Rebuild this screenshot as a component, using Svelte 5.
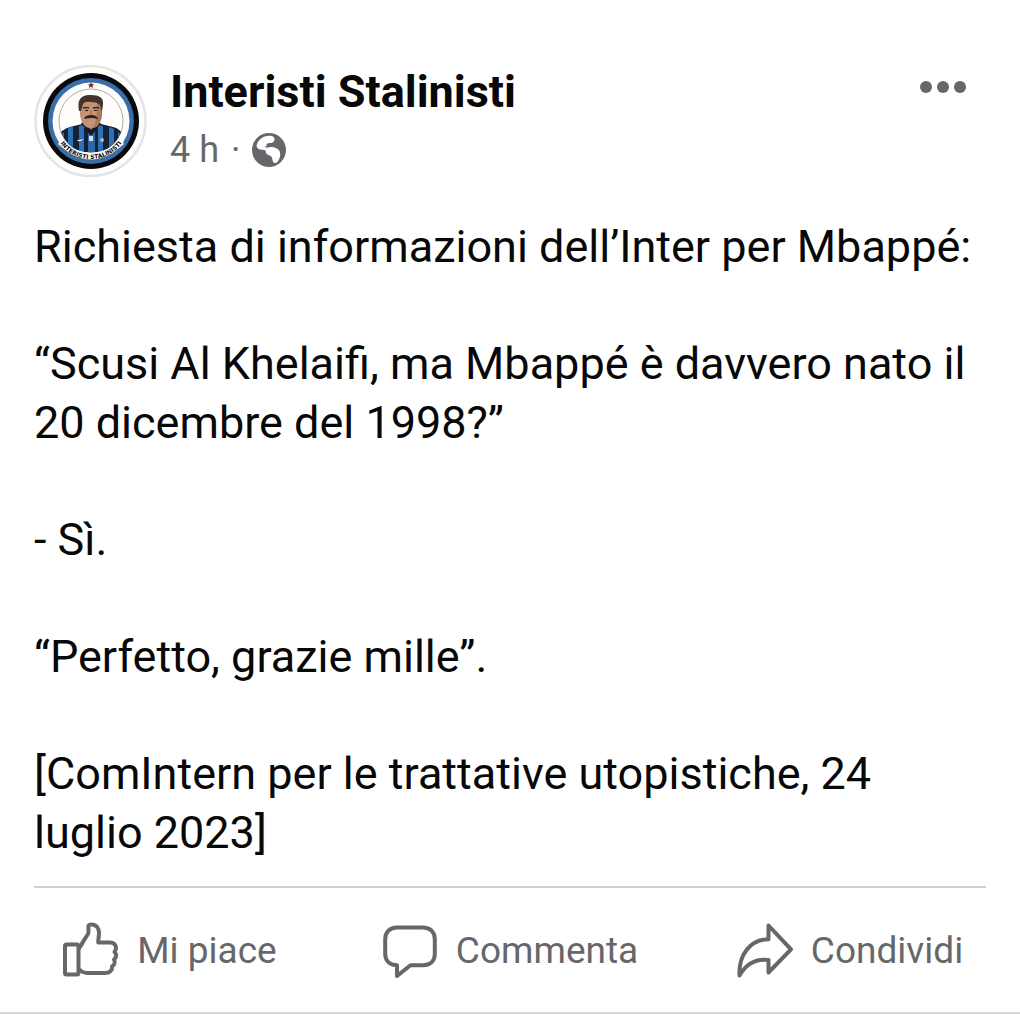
<script lang="ts">
	const author = 'Interisti Stalinisti';
	const age = '4 h';

	const paragraphs = [
		'Richiesta di informazioni dell’Inter per Mbappé:',
		'“Scusi Al Khelaifi, ma Mbappé è davvero nato il 20 dicembre del 1998?”',
		'- Sì.',
		'“Perfetto, grazie mille”.',
		'[ComIntern per le trattative utopistiche, 24 luglio 2023]'
	];

	let liked = $state(false);
</script>

<article class="post">
	<header class="post-header">
		<a class="avatar" href="#profile" aria-label={author}>
			<svg viewBox="0 0 113 113" aria-hidden="true">
				<defs>
					<clipPath id="portrait">
						<circle cx="57" cy="56" r="32" />
					</clipPath>
					<path id="motto" d="M 19 56 A 38 38 0 0 0 95 56" />
				</defs>
				<circle cx="56.5" cy="56" r="55" fill="#fffefb" stroke="#e2e5e8" stroke-width="2.5" />
				<circle cx="57" cy="56" r="48" fill="#07090f" />
				<circle cx="57" cy="56" r="43" fill="#3b6ea5" />
				<circle cx="57" cy="56" r="38.5" fill="#fbfdff" />
				<circle cx="57" cy="56" r="32" fill="#fffefc" stroke="#b9ac92" stroke-width="1" />
				<path d="M57 17l1 2.200 2.200.1-1.700 1.500.6 2.200-2.100-1.200-2.100 1.200.6-2.200-1.700-1.500 2.200-.1z" fill="#7c2420" />
				<g clip-path="url(#portrait)">
					<path d="M25 90V72q2-8 11-10l12-3h19l12 3q8 2 11 10v18z" fill="#14213a" />
					<path d="M34 63l5-2v30h-5zM45 61l5-1v30h-5zM64 60l5 1v29h-5zM75 62l5 2v26h-5zM27 70l3-3v23h-3zM84 67l3 3v20h-3z" fill="#2d70b3" />
					<path d="M54 65h7v22h-7z" fill="#2b69a8" />
					<path d="M49 53h16v8l-8 7-8-7z" fill="#a9775d" />
					<path d="M47 58l3-1 7 8 7-8 3 1-9 12h-2z" fill="#17191f" />
					<path d="M46 41q0-9 11-9t11 9v9q-1 8-6 12-5 2-10 0-5-4-6-12z" fill="#c39377" />
					<path d="M63 37q5 2 5 9v4q-1 8-6 12-2 1-3 1 5-8 4-26z" fill="#a9775d" />
					<path d="M45 46q-3-15 9-16 16-1 15 9l-1 8-2-7q-3-3-9-3-6-1-8 2l-2 7z" fill="#43332d" />
					<path d="M49 43q3-1 6 0M59 43q3-1 6 0" fill="none" stroke="#3a2824" stroke-width="1.500" />
					<path d="M51 45.500h3M60 45.500h3" stroke="#221a1a" stroke-width="1" />
					<path d="M57 45v5" stroke="#96664e" stroke-width="1" />
					<path d="M50 54q1-4 7-4t7 4q-4-1-7-1t-7 1z" fill="#35211d" />
					<path d="M43 75q2 3 7-1-3 1-7 1z" fill="#fff" />
					<path d="M55 71h4v5h-4z" fill="#d7e1e7" />
					<circle cx="68" cy="75" r="2" fill="#b9b89b" />
				</g>
				<path d="M26 76q31 23 62 0l2 3q-33 30-66 0z" fill="#fbfdff" />
				<text class="motto"><textPath href="#motto" startOffset="50%" text-anchor="middle">INTERISTI STALINISTI</textPath></text>
			</svg>
		</a>
		<div class="byline">
			<a class="author" href="#profile">{author}</a>
			<div class="meta">
				<span>{age}</span>
				<span class="dot">·</span>
				<svg class="globe" viewBox="0 0 34 34" role="img" aria-label="Pubblico">
					<circle cx="17" cy="17" r="17" fill="#65676b" />
					<path
						d="M4.500 13.500C5 9 8.500 4.800 13 3.500C16 2.400 20 2.400 21.800 4.200C23.300 5.900 22.500 8.600 20.200 9.700C18.600 10.400 18 9.600 16.200 10.200C14.200 10.900 13.500 12 15.500 12.700L12.800 13.500L14 14.800L18.800 14C22 13.800 26.500 15.500 27.800 18.500C28.800 21.500 28 26 25.500 28.800C23.800 30.700 21.500 30.500 20.800 28C20.200 25.600 20.200 23.600 17.800 22.400C14.500 21.400 13.500 20.400 13.800 17.500C11 16.500 6.500 17.500 4.500 13.500Z"
						fill="#fff"
					/>
				</svg>
			</div>
		</div>
		<button class="more" aria-label="Altre opzioni">
			<svg viewBox="0 0 46 12" aria-hidden="true">
				<circle cx="6" cy="6" r="6" />
				<circle cx="23" cy="6" r="6" />
				<circle cx="40" cy="6" r="6" />
			</svg>
		</button>
	</header>

	<div class="post-body">
		{#each paragraphs as text}
			<p>{text}</p>
		{/each}
	</div>

	<footer class="actions">
		<button aria-pressed={liked} onclick={() => (liked = !liked)}>
			<svg viewBox="0 0 56 56" aria-hidden="true">
				<rect x="2" y="22.500" width="13.500" height="30" rx="1.500" />
				<path
					d="M16 26C18 24 19 22 20.500 19L25 12C26 10 25.200 7 25.500 4C25.800 2.500 27 2.500 28.500 2.500C33 2.500 36 6 36 11C36 14 35.200 17 35.200 20.500H47C51 20.500 53 23 53 26C53 28 52 29 51.500 30C54 32 53.500 35.500 51 37.500C52.500 40 51.500 43 49 44.500C49.500 48 47 51 42 51H24C20 51 18.500 49.500 16 47.500"
				/>
			</svg>
			<span>Mi piace</span>
		</button>
		<button>
			<svg viewBox="0 0 56 56" aria-hidden="true">
				<path d="M15 5.500H41C48 5.500 52.800 10 52.800 17V32C52.800 39 48 43.200 41 43.200H28.500L15 54V43.200C7.500 43 3.200 38.500 3.200 32V17C3.200 10 8 5.500 15 5.500Z" />
			</svg>
			<span>Commenta</span>
		</button>
		<button>
			<svg viewBox="0 0 56 56" aria-hidden="true">
				<path d="M31.500 3.500L54 27.300L31.500 50.500V38C19 36.500 9 42 2.500 53.500C1.500 33 13 17.500 31.500 17.200Z" />
			</svg>
			<span>Condividi</span>
		</button>
	</footer>
</article>

<style>
	:global(body) {
		margin: 0;
		background: #fff;
	}

	.post {
		padding-top: 65px;
		border-bottom: 2px solid #d4d5d7;
		font-family: Roboto, sans-serif;
		color: #080809;
	}

	.post-header {
		display: flex;
		align-items: flex-start;
		gap: 23px;
		padding: 0 34px;
	}

	.avatar,
	.avatar svg {
		display: block;
		width: 113px;
		height: 113px;
		flex-shrink: 0;
	}

	.motto {
		font-family: 'DejaVu Sans', sans-serif;
		font-size: 6px;
		font-weight: 700;
		fill: #0b0c10;
	}

	.byline {
		flex: 1;
	}

	.author {
		display: block;
		font-size: 45px;
		font-weight: 700;
		line-height: 54px;
		color: inherit;
		text-decoration: none;
	}

	.meta {
		display: flex;
		align-items: center;
		gap: 12px;
		font-size: 36px;
		line-height: 62px;
		color: #65676b;
	}

	.globe {
		width: 34px;
		height: 34px;
	}

	button {
		border: none;
		background: none;
		padding: 0;
		font: inherit;
		color: #65676b;
		cursor: pointer;
	}

	.more {
		padding: 16px 20px;
	}

	.more svg {
		display: block;
		width: 46px;
		height: 12px;
		fill: #65676b;
	}

	.post-body {
		display: flex;
		flex-direction: column;
		gap: 58px;
		margin: 0 34px;
		padding: 36px 0 24px;
		border-bottom: 2px solid #ced0d4;
	}

	p {
		margin: 0;
		font-size: 45px;
		line-height: 59px;
	}

	.actions {
		display: grid;
		grid-template-columns: repeat(3, 1fr);
	}

	.actions button {
		display: flex;
		align-items: center;
		justify-content: center;
		gap: 18px;
		padding: 34px 0;
		font-size: 37px;
	}

	.actions svg {
		width: 56px;
		height: 56px;
		fill: none;
		stroke: #65676b;
		stroke-width: 4;
		stroke-linejoin: round;
		stroke-linecap: round;
	}
</style>
